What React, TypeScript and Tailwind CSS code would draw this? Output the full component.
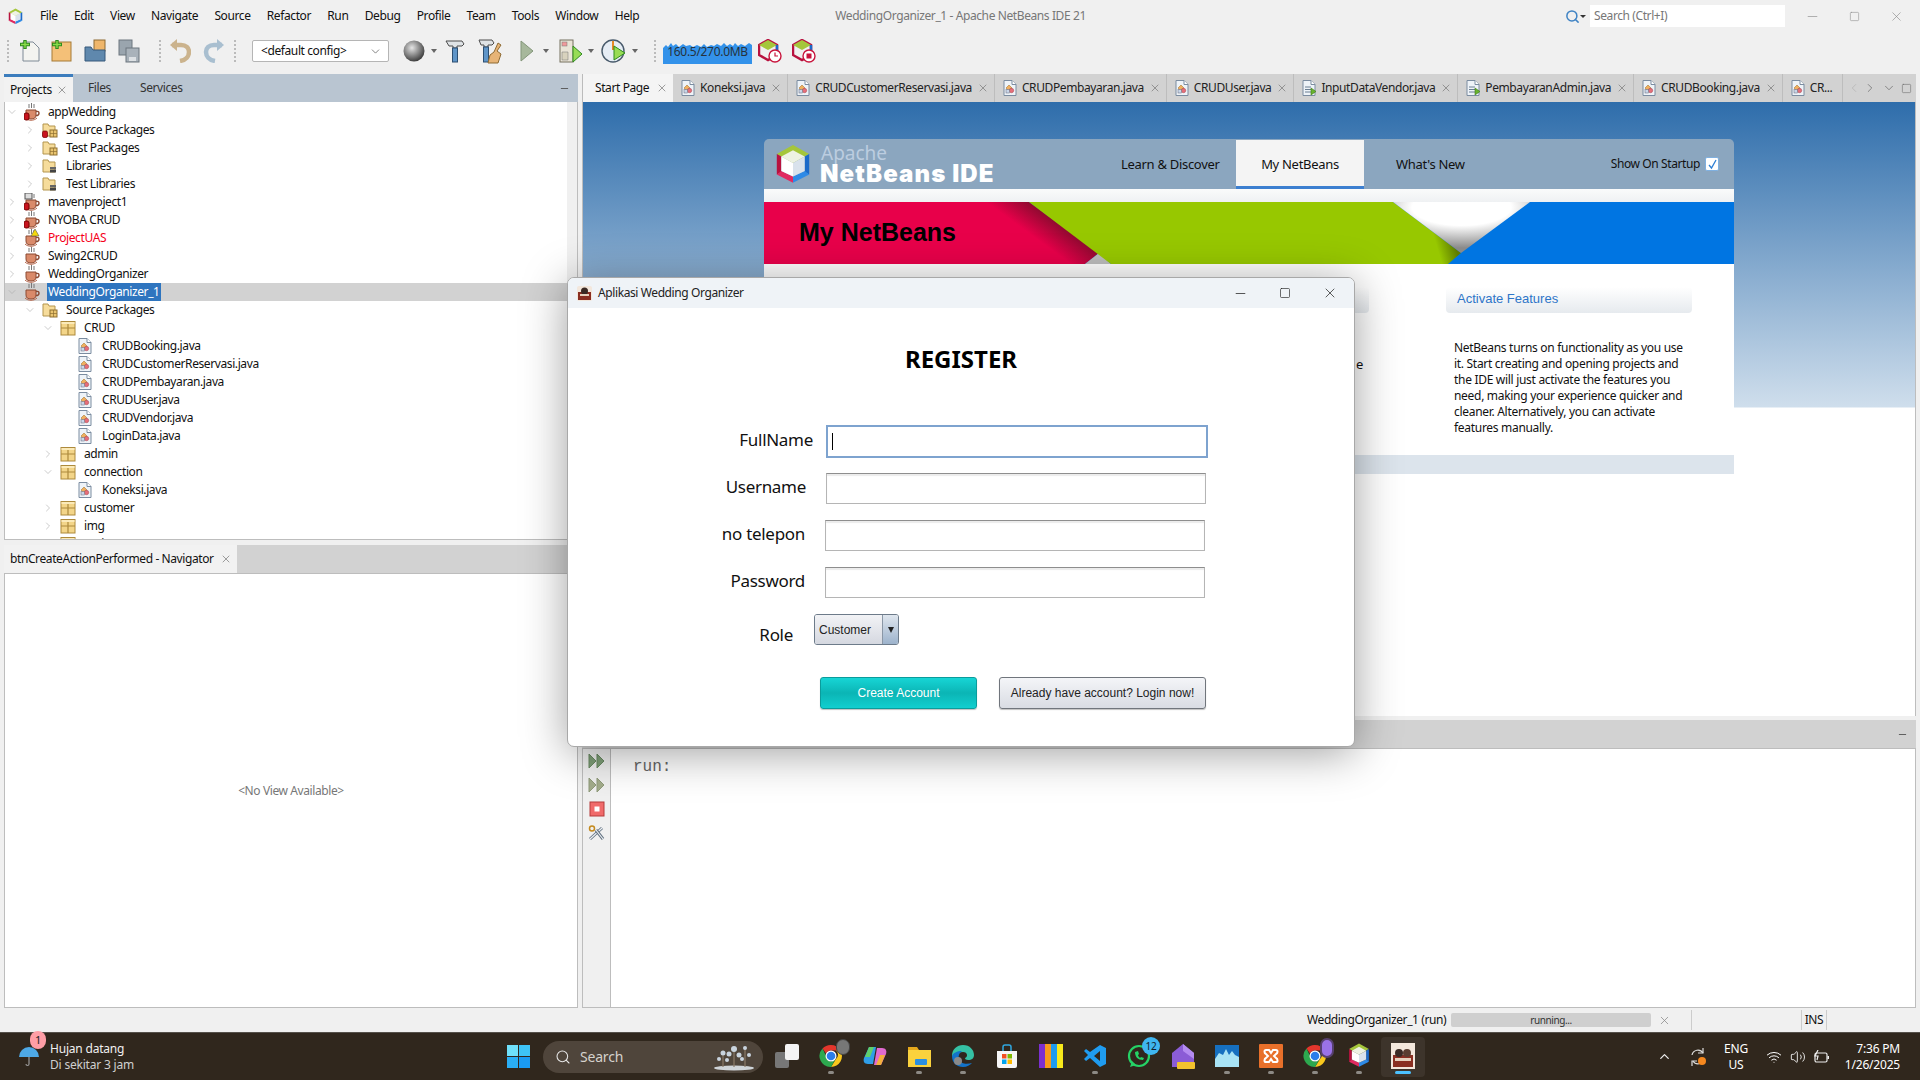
import { ChevronDown, ChevronLeft, ChevronRight, ChevronUp, Minus, Search, Square, Volume2, Wifi, X } from "lucide-react"

const ui = "font-['Noto_Sans',sans-serif] tracking-[-0.4px]"

function CupIcon({ badge }: { badge?: "red" | "warn" | "maven" }) {
  return (
    <svg width="17" height="18" viewBox="0 0 17 18" className="shrink-0">
      <path d="M5 1v4M7.5 0v5M10 1v4" stroke="#777" strokeWidth="1" />
      <path d="M2 7h10v5c0 3-2 4-5 4s-5-1-5-4z" fill="#d98a6a" stroke="#8c4a33" />
      <path d="M12 8.5c4-1 4 4 0 4" fill="none" stroke="#8c4a33" strokeWidth="1.4" />
      <path d="M1 15c3 3 9 3 12 0" fill="none" stroke="#b5654a" />
      {badge === "red" && <rect x="0" y="10" width="5" height="7" rx="2" fill="#c8141e" stroke="#700" />}
      {badge === "maven" && <rect x="0" y="10" width="5" height="7" rx="2" fill="#c8141e" stroke="#700" />}
      {badge === "maven" && <rect x="1" y="0" width="7" height="6" fill="#ddd" stroke="#555" />}
      {badge === "warn" && <path d="M11 0l4 7H7z" fill="#f5d90a" stroke="#555" strokeWidth=".6" />}
    </svg>
  )
}

function FolderIcon({ kind, red }: { kind: "src" | "lib"; red?: boolean }) {
  return (
    <svg width="16" height="16" viewBox="0 0 16 16" className="shrink-0">
      <path d="M1 2h5l1 2h6v10H1z" fill="#f6dc9b" stroke="#b3954f" />
      {kind === "src" ? (
        <g>
          <rect x="8" y="8" width="7" height="7" fill="#e9c46f" stroke="#8f7030" />
          <path d="M11.5 8v7M8 11.5h7" stroke="#8f7030" strokeWidth=".7" />
        </g>
      ) : (
        <g>
          <rect x="8" y="9" width="6" height="2" fill="#666" />
          <rect x="8" y="11.5" width="6" height="3" fill="#444" />
        </g>
      )}
      {red && <rect x="0.5" y="9" width="5" height="6.500" rx="1.500" fill="#c8141e" stroke="#700" strokeWidth=".7" />}
    </svg>
  )
}

function PackageIcon() {
  return (
    <svg width="16" height="16" viewBox="0 0 16 16" className="shrink-0">
      <rect x="1" y="1.5" width="14" height="13.5" fill="#f3d589" stroke="#ad8a3c" />
      <path d="M1 8h14M8 1.5V15" stroke="#ad8a3c" strokeWidth="1.2" />
      <rect x="1.5" y="2" width="13" height="2" fill="#fbeab9" />
    </svg>
  )
}

function FileIcon({ run }: { run?: boolean }) {
  return (
    <svg width="14" height="16" viewBox="0 0 14 16" className="shrink-0">
      <path d="M1 .5h8l4 4v11H1z" fill="#eef3f8" stroke="#7b8ca0" />
      <path d="M9 .5v4h4" fill="#fff" stroke="#7b8ca0" />
      {run ? (
        <g>
          <path d="M3 7h6M3 9.5h6M3 12h6" stroke="#6b7f93" />
          <path d="M9 8l5 3.5-5 3.5z" fill="#69b32e" stroke="#3d7a14" strokeWidth=".6" />
        </g>
      ) : (
        <g>
          <path d="M6 5l3 3-3 3-3-3z" fill="#f0b060" stroke="#9a6a20" strokeWidth=".5" />
          <circle cx="8.5" cy="10.5" r="2.2" fill="#e66f7a" stroke="#a03a44" strokeWidth=".5" />
          <rect x="3" y="9.5" width="3.5" height="3.5" fill="#c9d7ea" stroke="#667" strokeWidth=".5" />
        </g>
      )}
    </svg>
  )
}

function NetBeansLogo({ size }: { size: number }) {
  return (
    <svg width={size} height={size * 1.1} viewBox="0 0 40 44">
      <path d="M20 1L38 11 20 21 2 11z" fill="#a5c63b" />
      <path d="M2 11l5 3v17l-5 3z" fill="#b8123f" />
      <path d="M38 11l-5 3v17l5 3z" fill="#1b6ac9" />
      <path d="M2 34l18 9V36L7 30z" fill="#e02a60" />
      <path d="M38 34L20 43V36l13-6z" fill="#2e8ae6" />
      <path d="M7 14l13-7 13 7-13 7z" fill="#eef2e4" />
      <path d="M7 14l13 7v15L7 30z" fill="#ffffff" />
      <path d="M33 14l-13 7v15l13-6z" fill="#d9e2ec" />
    </svg>
  )
}

function Grip() {
  return <div className="w-[2px] h-[22px] border-l-2 border-dotted border-[#bbb] shrink-0" />
}

function DropCaret() {
  return <div className="w-0 h-0 border-x-[3px] border-x-transparent border-t-[4px] border-t-[#666] shrink-0" />
}

function CloseX({ className }: { className?: string }) {
  return <X size={12} strokeWidth={1.4} className={className ?? "text-[#777] shrink-0"} />
}

const menus = ["File", "Edit", "View", "Navigate", "Source", "Refactor", "Run", "Debug", "Profile", "Team", "Tools", "Window", "Help"]

function TitleBar() {
  return (
    <div className="h-[32px] flex items-center bg-[#f0f0f0] shrink-0">
      <div className="w-[40px] pl-[8px] flex">
        <NetBeansLogo size={15} />
      </div>
      <div className="flex gap-[16.3px] text-[12px] text-[#111]">
        {menus.map((m) => (
          <span key={m}>{m}</span>
        ))}
      </div>
      <div className="ml-[196px] text-[12px] text-[#777] w-[250px] text-center whitespace-nowrap">WeddingOrganizer_1 - Apache NetBeans IDE 21</div>
      <div className="ml-auto flex items-center">
        <Search size={15} strokeWidth={2.4} className="text-[#3f83c4]" />
        <div className="w-0 h-0 mr-[2px] border-x-[3px] border-x-transparent border-t-[3px] border-t-[#333]" />
        <div className="w-[195px] h-[22px] ml-[2px] bg-white text-[12px] text-[#777] pl-[4px] leading-[22px]">Search (Ctrl+I)</div>
        <div className="flex items-center text-[#888] pl-[20px] pr-[16px] gap-[29px]">
          <Minus size={15} strokeWidth={1} />
          <Square size={11} strokeWidth={1.2} />
          <X size={15} strokeWidth={1} />
        </div>
      </div>
    </div>
  )
}

function Toolbar() {
  return (
    <div className="h-[42px] flex items-center bg-[#f0f0f0] shrink-0 pl-[7px] pb-[4px]">
      <Grip />
      <svg width="22" height="24" viewBox="0 0 22 24" className="ml-[9px]">
        <path d="M5 3h10l6 6v13H5z" fill="#f4f4f0" stroke="#7e8a96" />
        <path d="M7 1v9M2 5.500h10" stroke="#2e8b1f" strokeWidth="3.400" />
        <path d="M7 2v7M3 5.500h8" stroke="#8bdc4b" strokeWidth="1.400" />
      </svg>
      <svg width="22" height="24" viewBox="0 0 22 24" className="ml-[10px]">
        <rect x="2" y="3" width="19" height="19" fill="#f4c078" stroke="#a57b36" />
        <path d="M7 1v9M2 5.500h10" stroke="#2e8b1f" strokeWidth="3.400" />
        <path d="M7 2v7M3 5.500h8" stroke="#8bdc4b" strokeWidth="1.400" />
      </svg>
      <svg width="22" height="24" viewBox="0 0 22 24" className="ml-[12px]">
        <rect x="10" y="1" width="11" height="11" fill="#efb66b" stroke="#8d6a33" />
        <path d="M1 8h6l2 3h12v11H1z" fill="#5f88ad" stroke="#37587a" />
      </svg>
      <svg width="22" height="24" viewBox="0 0 22 24" className="ml-[12px]">
        <rect x="1" y="1" width="13" height="15" fill="#9aa5ae" stroke="#6c767f" />
        <rect x="8" y="9" width="13" height="14" fill="#a9b2ba" stroke="#6c767f" />
        <rect x="11" y="18" width="7" height="4" fill="#dde1e4" />
      </svg>
      <div className="ml-[19px]">
        <Grip />
      </div>
      <svg width="22" height="24" viewBox="0 0 22 24" className="ml-[8px]">
        <path d="M3 6h9c5 0 8 3 8 7s-3 8-9 9" fill="none" stroke="#cbb38d" strokeWidth="4.500" />
        <path d="M8 0v12L1 6z" fill="#cbb38d" />
      </svg>
      <svg width="22" height="24" viewBox="0 0 22 24" className="ml-[12px]">
        <path d="M19 6h-8C6 6 3 9 3 13s3 8 9 9" fill="none" stroke="#a9bfd0" strokeWidth="4.500" />
        <path d="M14 0v12l7-6z" fill="#a9bfd0" />
      </svg>
      <div className="ml-[9px]">
        <Grip />
      </div>
      <div className="ml-[16px] w-[137px] h-[22px] bg-white border border-[#b5b5b5] rounded-[2px] flex items-center justify-between pl-[8px] pr-[6px] text-[12px] text-[#111]">
        <span>&lt;default config&gt;</span>
        <ChevronDown size={13} strokeWidth={1.2} className="text-[#444]" />
      </div>
      <svg width="22" height="22" viewBox="0 0 22 22" className="ml-[14px]">
        <defs>
          <radialGradient id="globe" cx=".4" cy=".35" r=".7">
            <stop offset="0" stopColor="#e5e5e5" />
            <stop offset="1" stopColor="#333" />
          </radialGradient>
        </defs>
        <circle cx="11" cy="11" r="10.500" fill="url(#globe)" />
      </svg>
      <div className="ml-[6px]">
        <DropCaret />
      </div>
      <svg width="20" height="24" viewBox="0 0 20 24" className="ml-[8px]">
        <path d="M1 2h16l2 3-2 2H12v2H8V7H4z" fill="#dfe3e6" stroke="#4c4c4c" />
        <rect x="7.500" y="9" width="5" height="14" fill="#5f95c8" stroke="#2c4f72" />
      </svg>
      <svg width="26" height="26" viewBox="0 0 26 26" className="ml-[13px]">
        <path d="M1 2h13l2 3-2 2h-4v2H6V7H3z" fill="#dfe3e6" stroke="#4c4c4c" />
        <rect x="5.500" y="9" width="5" height="15" fill="#5f95c8" stroke="#2c4f72" />
        <path d="M20 5l3 2-4 6 4 3-3 9H10l2-8 4-3z" fill="#e7b477" stroke="#8d6a33" />
      </svg>
      <svg width="14" height="22" viewBox="0 0 14 22" className="ml-[16px]">
        <path d="M1 1l12 10L1 21z" fill="#a7b89c" stroke="#83967a" />
      </svg>
      <div className="ml-[9px]">
        <DropCaret />
      </div>
      <svg width="24" height="26" viewBox="0 0 24 26" className="ml-[10px]">
        <rect x="1" y="2" width="13" height="22" fill="#e9e4d6" stroke="#74705f" />
        <rect x="3" y="4" width="5" height="4" fill="#f09a9a" stroke="#777" strokeWidth=".5" />
        <path d="M3 14h6v8H3z" fill="#d8d2bd" stroke="#777" strokeWidth=".5" />
        <path d="M14 8l9 8-9 8z" fill="#98dc55" stroke="#2e8b1f" />
      </svg>
      <div className="ml-[5px]">
        <DropCaret />
      </div>
      <svg width="26" height="26" viewBox="0 0 26 26" className="ml-[7px]">
        <circle cx="12" cy="13" r="11" fill="#e6edf5" stroke="#485a6b" strokeWidth="1.400" />
        <path d="M12 3v9" stroke="#e68a25" strokeWidth="2" />
        <path d="M13 8l11 7-11 7z" fill="#98dc55" stroke="#2e8b1f" />
      </svg>
      <div className="ml-[5px]">
        <DropCaret />
      </div>
      <div className="ml-[16px]">
        <Grip />
      </div>
      <div className="ml-[7px] relative w-[89px] h-[22px] mt-[4px] text-[12px] leading-[20px] tracking-[-0.3px] text-center text-[#26323d]">
        <svg viewBox="0 0 89 22" className="absolute inset-0 w-full h-full">
          <path d="M0 6l3-3 2 2 3-4 2 3 3-2 3 3 4-3 3 2 4-1 3 2 4-2 4 2 3-3 3 3 4-2 3 1 3-2 4 2 3-3 3 3 3-2 3 2 2-3 3 3 3-2 4 2 4-3 3 2V22H0z" fill="#3392ea" />
        </svg>
        <span className="relative">160.5/270.0MB</span>
      </div>
      <svg width="24" height="24" viewBox="0 0 24 24" className="ml-[6px]">
        <path d="M10 1l9 5v10l-9 5-9-5V6z" fill="none" stroke="#b8123f" strokeWidth="2.500" />
        <path d="M10 1l9 5-9 5-9-5z" fill="#a5c63b" />
        <path d="M19 6v8" stroke="#1b6ac9" strokeWidth="2.500" />
        <circle cx="17" cy="17" r="6" fill="#fff" stroke="#c8143c" strokeWidth="1.400" />
        <path d="M17 13.500V17h3" fill="none" stroke="#c8143c" strokeWidth="1.200" />
      </svg>
      <svg width="24" height="24" viewBox="0 0 24 24" className="ml-[10px]">
        <path d="M10 1l9 5v10l-9 5-9-5V6z" fill="none" stroke="#b8123f" strokeWidth="2.500" />
        <path d="M10 1l9 5-9 5-9-5z" fill="#a5c63b" />
        <path d="M19 6v8" stroke="#1b6ac9" strokeWidth="2.500" />
        <circle cx="17" cy="17" r="6" fill="#fff" stroke="#c8143c" strokeWidth="1.400" />
        <rect x="14.500" y="14.500" width="5" height="5" fill="#c8143c" />
      </svg>
    </div>
  )
}

type Row = {
  level: 0 | 1 | 2 | 3
  open?: boolean
  caret?: boolean
  icon: "cup" | "cupRed" | "cupWarn" | "cupMaven" | "src" | "srcRed" | "lib" | "pkg" | "file"
  text: string
  selected?: boolean
  red?: boolean
}

const rows: Row[] = [
  { level: 0, caret: true, open: true, icon: "cupRed", text: "appWedding" },
  { level: 1, caret: true, icon: "srcRed", text: "Source Packages" },
  { level: 1, caret: true, icon: "src", text: "Test Packages" },
  { level: 1, caret: true, icon: "lib", text: "Libraries" },
  { level: 1, caret: true, icon: "lib", text: "Test Libraries" },
  { level: 0, caret: true, icon: "cupMaven", text: "mavenproject1" },
  { level: 0, caret: true, icon: "cupRed", text: "NYOBA CRUD" },
  { level: 0, caret: true, icon: "cupWarn", text: "ProjectUAS", red: true },
  { level: 0, caret: true, icon: "cup", text: "Swing2CRUD" },
  { level: 0, caret: true, icon: "cup", text: "WeddingOrganizer" },
  { level: 0, caret: true, open: true, icon: "cup", text: "WeddingOrganizer_1", selected: true },
  { level: 1, caret: true, open: true, icon: "src", text: "Source Packages" },
  { level: 2, caret: true, open: true, icon: "pkg", text: "CRUD" },
  { level: 3, icon: "file", text: "CRUDBooking.java" },
  { level: 3, icon: "file", text: "CRUDCustomerReservasi.java" },
  { level: 3, icon: "file", text: "CRUDPembayaran.java" },
  { level: 3, icon: "file", text: "CRUDUser.java" },
  { level: 3, icon: "file", text: "CRUDVendor.java" },
  { level: 3, icon: "file", text: "LoginData.java" },
  { level: 2, caret: true, icon: "pkg", text: "admin" },
  { level: 2, caret: true, open: true, icon: "pkg", text: "connection" },
  { level: 3, icon: "file", text: "Koneksi.java" },
  { level: 2, caret: true, icon: "pkg", text: "customer" },
  { level: 2, caret: true, icon: "pkg", text: "img" },
  { level: 2, caret: true, icon: "pkg", text: "main" },
]

const indent = ["pl-[1px]", "pl-[19px]", "pl-[37px]", "pl-[55px]"]

function RowIcon({ icon }: { icon: Row["icon"] }) {
  if (icon === "cup") return <CupIcon />
  if (icon === "cupRed") return <CupIcon badge="red" />
  if (icon === "cupWarn") return <CupIcon badge="warn" />
  if (icon === "cupMaven") return <CupIcon badge="maven" />
  if (icon === "src" || icon === "lib") return <FolderIcon kind={icon} />
  if (icon === "srcRed") return <FolderIcon kind="src" red />
  if (icon === "pkg") return <PackageIcon />
  return <FileIcon />
}

function TreeRow({ row }: { row: Row }) {
  return (
    <div className={`h-[18px] flex items-center ${indent[row.level]} ${row.selected ? "bg-[#d2d2d2]" : ""}`}>
      <div className="w-[13px] shrink-0 text-[#aaa]">
        {row.caret && (row.open ? <ChevronDown size={12} strokeWidth={1.2} /> : <ChevronRight size={12} strokeWidth={1.2} />)}
      </div>
      <div className="w-[28px] shrink-0 flex pl-[5px]">
        <RowIcon icon={row.icon} />
      </div>
      <span className={`text-[12px] leading-[18px] whitespace-nowrap px-[1px] ${row.red ? "text-[#f5001a]" : "text-[#111]"} ${row.selected ? "bg-[#2f75bf] text-white" : ""}`}>
        {row.text}
      </span>
    </div>
  )
}

function LeftPane() {
  return (
    <div className="w-[574px] ml-[4px] shrink-0 flex flex-col">
      <div className="h-[28px] bg-[#b9c5d1] flex items-stretch shrink-0 text-[12px]">
        <div className="w-[69px] bg-[#f2f2f2] border-t-[3px] border-[#3c7dbd] flex items-center pl-[6px] gap-[4px] text-[#111]">
          Projects
          <CloseX />
        </div>
        <span className="ml-[15px] self-center text-[#333]">Files</span>
        <span className="ml-[29px] self-center text-[#333]">Services</span>
        <Minus size={11} className="ml-auto mr-[8px] self-center text-[#555]" />
      </div>
      <div className="h-[438px] overflow-hidden bg-white border-x border-b border-[#bdbdbd] flex shrink-0">
        <div className="flex-1 pt-[1px]">
          {rows.map((row, i) => (
            <TreeRow key={i} row={row} />
          ))}
        </div>
        <div className="w-[10px] bg-[#f0f0f0]" />
      </div>
      <div className="h-[5px] shrink-0" />
      <div className="h-[28px] bg-[#d2d2d2] flex items-stretch shrink-0 text-[12px]">
        <div className="w-[233px] bg-[#f2f2f2] flex items-center pl-[6px] gap-[6px] text-[#111] whitespace-nowrap">
          btnCreateActionPerformed - Navigator
          <CloseX />
        </div>
      </div>
      <div className="flex-1 bg-white border border-[#bdbdbd] flex items-center justify-center text-[12px] text-[#777]">&lt;No View Available&gt;</div>
    </div>
  )
}

type Tab = { name: string; run?: boolean; noClose?: boolean }

const tabs: Tab[] = [
  { name: "Koneksi.java" },
  { name: "CRUDCustomerReservasi.java" },
  { name: "CRUDPembayaran.java" },
  { name: "CRUDUser.java" },
  { name: "InputDataVendor.java", run: true },
  { name: "PembayaranAdmin.java", run: true },
  { name: "CRUDBooking.java" },
  { name: "CR...", noClose: true },
]

function EditorTabs() {
  return (
    <div className="h-[28px] bg-[#d2d2d2] flex items-stretch shrink-0 text-[12px] text-[#222]">
      <div className="w-[91px] shrink-0 bg-[#f4f4f4] flex items-center pl-[12px] gap-[7px] text-[#111] border-l border-[#bbb] whitespace-nowrap">
        Start Page
        <CloseX />
      </div>
      {tabs.map((t) => (
        <div key={t.name} className="flex shrink-0 items-center pl-[8px] pr-[5px] border-r border-[#bdbdbd] last:border-r-0">
          <FileIcon run={t.run} />
          <span className="ml-[5px] mr-[5px] whitespace-nowrap">{t.name}</span>
          {!t.noClose && <CloseX />}
        </div>
      ))}
      <div className="ml-auto shrink-0 flex items-center gap-[2px] pr-[4px] text-[#666]">
        <ChevronLeft size={14} strokeWidth={1} className="text-[#aaa]" />
        <ChevronRight size={14} strokeWidth={1.2} />
        <ChevronDown size={14} strokeWidth={1.2} className="ml-[3px]" />
        <Square size={11} strokeWidth={1.2} className="ml-[3px]" />
      </div>
    </div>
  )
}

function Banner() {
  return (
    <div className="relative h-[62px] flex items-center pl-[35px] shrink-0">
      <svg viewBox="0 0 970 62" className="absolute inset-0 w-full h-full">
        <defs>
          <radialGradient id="fold" cx=".5" cy=".1" r=".8">
            <stop offset="0.45" stopColor="#ffffff" />
            <stop offset="1" stopColor="#8a8a8a" />
          </radialGradient>
          <linearGradient id="redShade" gradientUnits="userSpaceOnUse" x1="285" y1="46" x2="300" y2="25.500">
            <stop offset="0" stopColor="#e8004a" />
            <stop offset="1" stopColor="#8f0a30" />
          </linearGradient>
          <linearGradient id="greenShade" gradientUnits="userSpaceOnUse" x1="675" y1="52" x2="692" y2="47">
            <stop offset="0" stopColor="#97c800" />
            <stop offset="1" stopColor="#5f7d00" />
          </linearGradient>
        </defs>
        <rect width="970" height="62" fill="#0075e2" />
        <path d="M0 0H265L335 51 321 62H0z" fill="url(#redShade)" />
        <path d="M321 62L335 51 347 62z" fill="#bdbdbd" />
        <path d="M265 0H629L697 51 684 62H347z" fill="url(#greenShade)" />
        <path d="M629 0H766L697 51z" fill="url(#fold)" />
      </svg>
      <span className="relative font-['Liberation_Sans',sans-serif] font-bold text-[25px] tracking-normal text-black">My NetBeans</span>
    </div>
  )
}

function StartPage() {
  return (
    <div className="h-[614px] shrink-0 border-x border-[#bdbdbd] pt-[37px] pl-[181px] bg-[linear-gradient(#2e6dab_0px,#cfdeec_305px,#ffffff_306px)]">
      <div className="w-[970px] flex flex-col">
        <div className="h-[50px] bg-[#8ba6bf] rounded-t-[5px] flex items-stretch">
          <div className="w-[357px] flex items-center pl-[11px]">
            <NetBeansLogo size={36} />
            <div className="ml-[10px] flex flex-col leading-none">
              <span className="text-[19px] leading-[18px] tracking-normal text-[#bccde0]">Apache</span>
              <span className="font-['Inter',sans-serif] font-black text-[24px] leading-[23px] text-white -ml-[1px] tracking-[1.1px]">NetBeans IDE</span>
            </div>
          </div>
          <div className="w-[115px] pt-[2px] text-[13px] flex items-center text-[#111] tracking-[-0.3px]">Learn &amp; Discover</div>
          <div className="w-[128px] mt-[1px] pt-[3px] bg-[#f4f4f4] border-b-[3px] border-[#3c7fd0] text-[13px] flex items-center justify-center text-[#111] tracking-[-0.3px]">My NetBeans</div>
          <div className="ml-[32px] pt-[2px] text-[13px] flex items-center text-[#111] tracking-[-0.3px]">What's New</div>
          <div className="ml-auto pr-[15px] text-[12px] flex items-center gap-[5px] text-[#111]">
            Show On Startup
            <div className="w-[14px] h-[14px] bg-white border border-[#7fb0e0] rounded-[2px] flex items-center justify-center">
              <svg width="11" height="11" viewBox="0 0 11 11">
                <path d="M2 6l2.500 3L9 1" fill="none" stroke="#2d7fd3" strokeWidth="1.300" />
              </svg>
            </div>
          </div>
        </div>
        <div className="h-[13px] bg-[linear-gradient(#fafbfb,#eff1f3)]" />
        <Banner />
        <div className="h-[191px] bg-white flex relative">
          <div className="ml-[30px] mt-[23px] w-[575px] h-[26px] rounded-[4px] bg-[linear-gradient(#ffffff,#e6eaee)]" />
          <div className="absolute left-[592px] top-[91px] text-[13px] text-[#111]">e</div>
          <div className="ml-[77px] mt-[23px] w-[246px] flex flex-col">
            <div className="h-[26px] rounded-[4px] bg-[linear-gradient(#ffffff,#e6eaee)] pl-[11px] font-['Liberation_Sans',sans-serif] text-[13px] leading-[24px] tracking-normal text-[#2e75c8]">Activate Features</div>
            <p className="mt-[27px] ml-[8px] w-[236px] text-[12px] leading-[16px] tracking-[-0.3px] text-[#111]">
              NetBeans turns on functionality as you use it. Start creating and opening projects and the IDE will just activate the features you need, making your experience quicker and cleaner. Alternatively, you can activate features manually.
            </p>
          </div>
        </div>
        <div className="h-[19px] bg-[#dce4ec]" />
      </div>
    </div>
  )
}

function OutputPane() {
  return (
    <div className="flex-1 flex flex-col min-h-0">
      <div className="h-[4px] shrink-0" />
      <div className="h-[28px] bg-[#d2d2d2] shrink-0 flex items-center justify-end pr-[8px]">
        <Minus size={11} className="text-[#555]" />
      </div>
      <div className="flex-1 flex border border-[#bdbdbd] bg-white">
        <div className="w-[28px] bg-[#f0f0f0] border-r border-[#bdbdbd] flex flex-col items-center pt-[4px] gap-[8px]">
          <svg width="17" height="16" viewBox="0 0 17 16">
            <path d="M1 1l7 7-7 7zM9 1l7 7-7 7z" fill="#7f9f78" stroke="#6a8a63" />
          </svg>
          <svg width="17" height="16" viewBox="0 0 17 16">
            <path d="M1 1l7 7-7 7zM9 1l7 7-7 7z" fill="#a3ad8c" stroke="#8f9a7a" />
          </svg>
          <svg width="16" height="16" viewBox="0 0 16 16">
            <rect x="1" y="1" width="14" height="14" fill="#f06a6a" stroke="#b53a3a" />
            <rect x="5.500" y="5.500" width="5" height="5" fill="#fff" />
          </svg>
          <svg width="17" height="16" viewBox="0 0 17 16">
            <circle cx="4" cy="3.500" r="2.500" fill="none" stroke="#c48a1e" strokeWidth="1.500" />
            <path d="M2 14L14 3" stroke="#5f6f7f" strokeWidth="3" />
            <path d="M2 14L14 3" stroke="#eef1f4" strokeWidth="1.200" />
            <path d="M8 5l7 9" stroke="#5f6f7f" strokeWidth="3" />
            <path d="M8 5l7 9" stroke="#eef1f4" strokeWidth="1.200" />
          </svg>
        </div>
        <div className="pl-[22px] pt-[8px] font-['Liberation_Mono',monospace] text-[16px] leading-[20px] tracking-normal text-[#666]">run:</div>
      </div>
    </div>
  )
}

function Dialog() {
  const label = "text-[17px] leading-[24px] tracking-[-0.3px] text-[#111] whitespace-nowrap text-right shrink-0"
  const input = "h-[31px] bg-white border border-[#b5b5b5] border-t-[#8e8e8e] shadow-[inset_0_2px_1px_#ececec]"
  const button = "h-[32px] rounded-[3px] text-[12px] tracking-normal flex items-center justify-center shadow-[0_1px_1px_rgba(0,0,0,0.25)]"
  return (
    <div className="absolute left-[567px] top-[277px] w-[788px] h-[470px] bg-white rounded-[7px] border border-[#a8a8a8] shadow-[0_6px_45px_rgba(0,0,0,0.38)] flex flex-col overflow-hidden">
      <div className="h-[30px] bg-[#eff3f7] flex items-center shrink-0 pl-[9px] pr-[16px] text-[12px] text-[#222]">
        <svg width="15" height="15" viewBox="0 0 15 15">
          <rect width="15" height="15" rx="2" fill="#f3e7dc" />
          <path d="M1 6h13v8H1z" fill="#8a2f22" />
          <circle cx="7.500" cy="5" r="3.500" fill="#3a2a24" />
          <rect x="3" y="8" width="9" height="2" fill="#e6d1bd" />
        </svg>
        <span className="ml-[6px]">Aplikasi Wedding Organizer</span>
        <div className="ml-auto flex items-center text-[#222] gap-[31px]">
          <Minus size={15} strokeWidth={1.2} />
          <Square size={12} strokeWidth={1.3} />
          <X size={16} strokeWidth={1.1} />
        </div>
      </div>
      <div className="flex-1 flex flex-col">
        <div className="mt-[35px] text-center text-[24px] leading-[32px] font-bold tracking-normal text-black">REGISTER</div>
        <div className="mt-[50px] flex items-center h-[33px]">
          <span className={`${label} w-[245px] -mt-[3px]`}>FullName</span>
          <div className="ml-[13px] w-[382px] h-[33px] bg-white border-2 border-[#7ea3cf] flex items-center pl-[4px]">
            <div className="w-[1px] h-[17px] bg-black" />
          </div>
        </div>
        <div className="mt-[15px] flex items-center">
          <span className={`${label} w-[238px] -mt-[3px]`}>Username</span>
          <div className={`${input} ml-[20px] w-[380px]`} />
        </div>
        <div className="mt-[16px] flex items-center">
          <span className={`${label} w-[237px] -mt-[3px]`}>no telepon</span>
          <div className={`${input} ml-[20px] w-[380px]`} />
        </div>
        <div className="mt-[16px] flex items-center">
          <span className={`${label} w-[237px] -mt-[3px]`}>Password</span>
          <div className={`${input} ml-[20px] w-[380px]`} />
        </div>
        <div className="mt-[16px] flex items-start">
          <span className={`${label} w-[225px] mt-[9px]`}>Role</span>
          <div className="ml-[21px] w-[85px] h-[31px] rounded-[3px] border border-[#6d7b8a] flex items-stretch overflow-hidden font-['Liberation_Sans',sans-serif] text-[12px] tracking-normal text-[#222]">
            <div className="flex-1 bg-[linear-gradient(#f2f3f6,#d5d8e0)] flex items-center pl-[4px]">Customer</div>
            <div className="w-[16px] bg-[linear-gradient(#dfe6ee,#9db3cc)] border-l border-[#8a97a6] flex items-center justify-center">
              <div className="w-0 h-0 border-x-[3.5px] border-x-transparent border-t-[6px] border-t-[#222]" />
            </div>
          </div>
        </div>
        <div className="mt-[30px] flex items-center font-['Liberation_Sans',sans-serif]">
          <div className={`${button} ml-[252px] w-[157px] border border-[#0b9c9c] bg-[linear-gradient(#17d5d5,#0bb5b5_50%,#11cfcf)] text-white`}>Create Account</div>
          <div className={`${button} ml-[22px] w-[207px] border border-[#70757c] bg-[linear-gradient(#f4f5f8,#d9dce3)] text-[#222]`}>Already have account? Login now!</div>
        </div>
      </div>
    </div>
  )
}

function StatusBar() {
  return (
    <div className="h-[24px] bg-[#f0f0f0] shrink-0 flex items-center text-[12px] text-[#111]">
      <span className="ml-[1307px] w-[144px] whitespace-nowrap">WeddingOrganizer_1 (run)</span>
      <div className="w-[200px] h-[14px] bg-[#cfcfcf] rounded-[2px] text-[10px] leading-[14px] text-center text-[#333]">running...</div>
      <X size={13} strokeWidth={1.4} className="ml-[7px] text-[#888]" />
      <div className="ml-[20px] h-[20px] border-l border-[#ccc]" />
      <div className="ml-[109px] h-[20px] w-[26px] border-x border-[#ccc] text-center leading-[20px]">INS</div>
    </div>
  )
}

function Dot({ active }: { active?: boolean }) {
  return <div className={`h-[3px] rounded-full ${active ? "w-[16px] bg-[#4cc2ff]" : "w-[6px] bg-[#8d8a85]"}`} />
}

function TaskIcon({ children, dot, active }: { children: React.ReactNode; dot?: boolean; active?: boolean }) {
  return (
    <div className={`w-[44px] h-[40px] flex flex-col items-center pt-[5px] relative rounded-[4px] ${active ? "bg-[#3d342b]" : ""}`}>
      <div className="h-[28px] flex items-center justify-center">{children}</div>
      <div className="mt-[1px] h-[3px]">{dot && <Dot active={active} />}</div>
    </div>
  )
}

function ChromeIcon() {
  return (
    <svg width="24" height="24" viewBox="0 0 24 24">
      <path d="M12 1a11 11 0 0 1 9.500 5.500H12a5.500 5.500 0 0 0-5 3L3.500 4.500A11 11 0 0 1 12 1z" fill="#e3362c" />
      <path d="M21.500 6.500A11 11 0 0 1 12 23l5-8a5.500 5.500 0 0 0 0-8.500z" fill="#f9c81d" />
      <path d="M12 23A11 11 0 0 1 3.500 4.500L7 12a5.500 5.500 0 0 0 5.500 5.500l4-2.500z" fill="#2da94f" />
      <circle cx="12" cy="12" r="5.500" fill="#fff" />
      <circle cx="12" cy="12" r="4.300" fill="#2b7de9" />
    </svg>
  )
}

function Taskbar() {
  return (
    <div className="h-[48px] bg-[#30271d] border-t border-[#55504a] shrink-0 flex items-center text-white relative tracking-[-0.2px]">
      <div className="w-[507px] flex items-center pl-[19px] shrink-0 relative">
        <svg width="20" height="20" viewBox="0 0 20 20">
          <path d="M0 10a10 10 0 0 1 20 0z" fill="#4ea9e6" />
          <path d="M10 10v7c0 2-3 2-3 0" fill="none" stroke="#999" strokeWidth="1.200" />
        </svg>
        <div className="absolute left-[30px] -top-[10px] w-[16px] h-[18px] rounded-full bg-[#ff9ea6] text-[11px] leading-[18px] text-center text-[#222]">1</div>
        <div className="ml-[11px] flex flex-col text-[12px] leading-[16px]">
          <span className="text-[#f0f0f0]">Hujan datang</span>
          <span className="text-[#cfcfcf]">Di sekitar 3 jam</span>
        </div>
      </div>
      <svg width="23" height="23" viewBox="0 0 23 23" className="shrink-0">
        <rect width="11" height="11" fill="#6fe0fa" />
        <rect x="12" width="11" height="11" fill="#3ec4f7" />
        <rect y="12" width="11" height="11" fill="#2aaef5" />
        <rect x="12" y="12" width="11" height="11" fill="#1a9af2" />
      </svg>
      <div className="ml-[13px] w-[220px] h-[32px] bg-[#4f453b] rounded-full flex items-center pl-[12px] pr-[8px] text-[14px] text-[#d5d2cd] shrink-0">
        <Search size={16} strokeWidth={1.6} className="text-[#e6e6e6]" />
        <span className="ml-[9px]">Search</span>
        <svg width="42" height="28" viewBox="0 0 42 28" className="ml-auto">
          <ellipse cx="21" cy="25" rx="20" ry="2.500" fill="#cfd4d8" />
          <path d="M21 24V8M10 24V12M32 24V6" stroke="#8a7a68" strokeWidth="1.200" />
          <g fill="#c9d4de">
            <circle cx="21" cy="6" r="3" />
            <circle cx="16" cy="11" r="2.500" />
            <circle cx="26" cy="12" r="2.500" />
            <circle cx="10" cy="10" r="2.500" />
            <circle cx="6" cy="16" r="2" />
            <circle cx="14" cy="17" r="2" />
            <circle cx="32" cy="5" r="2" />
            <circle cx="36" cy="12" r="2" />
            <circle cx="29" cy="16" r="2" />
          </g>
        </svg>
      </div>
      <div className="ml-[2px] flex items-center shrink-0">
        <TaskIcon>
          <div className="relative w-[24px] h-[24px]">
            <div className="absolute left-0 bottom-0 w-[14px] h-[16px] bg-[#777] rounded-[2px]" />
            <div className="absolute right-0 top-0 w-[14px] h-[16px] bg-[#f4f4f4] rounded-[2px]" />
          </div>
        </TaskIcon>
        <TaskIcon dot>
          <ChromeIcon />
          <div className="absolute right-[3px] top-[2px] w-[14px] h-[16px] rounded-full bg-[#777] border border-[#444]" />
        </TaskIcon>
        <TaskIcon>
          <svg width="24" height="24" viewBox="0 0 24 24">
            <path d="M6 3h7l-3 17H5c-4 0-5-3-4-6z" fill="#2f9ee8" />
            <path d="M6 3h5l-4 10H2z" fill="#5fcf6a" />
            <path d="M18 21h-7l3-17h5c4 0 5 3 4 6z" fill="#e06ad0" />
            <path d="M18 21h-5l4-10h5z" fill="#f4b13c" />
          </svg>
        </TaskIcon>
        <TaskIcon dot>
          <svg width="24" height="24" viewBox="0 0 24 24">
            <path d="M1 3h9l2 3H1z" fill="#e5a81c" />
            <rect x="1" y="6" width="23" height="17" fill="#fad23d" />
            <rect x="8" y="15" width="12" height="6" rx="1" fill="#2b8fe0" />
          </svg>
        </TaskIcon>
        <TaskIcon dot>
          <svg width="24" height="24" viewBox="0 0 24 24">
            <path d="M1 12C1 5 6 1 12 1c7 0 11 5 11 10 0 3-2 5-6 5-2 0-3-1-3-2 3-1 3-6-2-6-6 0-9 5-11 4z" fill="#35c1a4" />
            <path d="M1 12c0 7 5 11 11 11 4 0 7-2 9-4-4 1-11 2-13-4-1-3 0-6 3-8-5 0-9 2-10 5z" fill="#1373c9" />
            <circle cx="7" cy="17" r="4" fill="#8a8a8a" />
          </svg>
        </TaskIcon>
        <TaskIcon>
          <svg width="24" height="24" viewBox="0 0 24 24">
            <path d="M2 7h20v15a2 2 0 0 1-2 2H4a2 2 0 0 1-2-2z" fill="#f6f6f6" />
            <path d="M8 7V3a2 2 0 0 1 2-2h4a2 2 0 0 1 2 2v4" fill="none" stroke="#2fa8e0" strokeWidth="1.500" />
            <rect x="7" y="10" width="4.500" height="4.500" fill="#f25022" />
            <rect x="12.500" y="10" width="4.500" height="4.500" fill="#7fba00" />
            <rect x="7" y="15.500" width="4.500" height="4.500" fill="#00a4ef" />
            <rect x="12.500" y="15.500" width="4.500" height="4.500" fill="#ffb900" />
          </svg>
        </TaskIcon>
        <TaskIcon>
          <svg width="24" height="24" viewBox="0 0 24 24">
            <rect width="6" height="24" x="0" fill="#7b2fd0" />
            <rect width="6" height="24" x="6" fill="#f79a1b" />
            <rect width="6" height="24" x="12" fill="#1d9bf0" />
            <rect width="6" height="24" x="18" fill="#f7e91b" />
          </svg>
        </TaskIcon>
        <TaskIcon dot>
          <svg width="24" height="24" viewBox="0 0 24 24">
            <path d="M17 1l6 3v16l-6 3-10-9-4 3-2-2 4-4-4-4 2-2 4 3zM17 7l-6 5 6 5z" fill="#1f9cf0" />
          </svg>
        </TaskIcon>
        <TaskIcon>
          <svg width="24" height="24" viewBox="0 0 24 24">
            <circle cx="12" cy="12" r="10" fill="none" stroke="#25d366" strokeWidth="2.200" />
            <path d="M3 23l2-6 4 4z" fill="#25d366" />
            <path d="M8 8c0 5 3 8 8 8l1-2-3-1-1 1c-1-1-2-2-2-3l1-1-1-3z" fill="#25d366" />
          </svg>
          <div className="absolute right-[1px] top-[0px] w-[18px] h-[18px] rounded-full bg-[#3fb6f0] text-[10px] leading-[18px] text-center text-[#10202c]">12</div>
        </TaskIcon>
        <TaskIcon>
          <svg width="24" height="26" viewBox="0 0 24 26">
            <path d="M12 1l11 9v14H1V10z" fill="#8b5cd6" />
            <path d="M12 1l11 9v6L12 8z" fill="#b48bf0" />
            <rect x="6" y="19" width="18" height="7" rx="1" fill="#f2c12e" />
          </svg>
        </TaskIcon>
        <TaskIcon dot>
          <svg width="24" height="22" viewBox="0 0 24 22">
            <rect width="24" height="22" fill="#1670c0" />
            <path d="M0 14l4-6 4 2 3-6 3 6 3-4 3 4 4 2v10H0z" fill="#a8e3f5" />
          </svg>
        </TaskIcon>
        <TaskIcon dot>
          <svg width="24" height="24" viewBox="0 0 24 24">
            <rect width="24" height="24" rx="1" fill="#e8702a" />
            <path d="M7 6h3l2 3 2-3h3c2 0 2 3 0 4l-2 2 2 2c2 1 2 4 0 4h-3l-2-3-2 3H7c-2 0-2-3 0-4l2-2-2-2c-2-1-2-4 0-4z" fill="none" stroke="#fff" strokeWidth="2" />
          </svg>
        </TaskIcon>
        <TaskIcon dot>
          <ChromeIcon />
          <div className="absolute right-[3px] top-[1px] w-[14px] h-[20px] rounded-full bg-[#9a72e8] border-2 border-[#57406f]" />
        </TaskIcon>
        <TaskIcon dot>
          <NetBeansLogo size={22} />
        </TaskIcon>
        <TaskIcon dot active>
          <svg width="24" height="26" viewBox="0 0 24 26">
            <rect width="24" height="26" fill="#f3e7dc" />
            <path d="M2 12h20v12H2z" fill="#8a2f22" />
            <circle cx="8" cy="10" r="4" fill="#3a2a24" />
            <circle cx="16" cy="10" r="4" fill="#5a3d30" />
            <rect x="4" y="15" width="16" height="3" fill="#e6d1bd" />
          </svg>
        </TaskIcon>
      </div>
      <div className="absolute left-[1657px] top-0 h-[47px] flex items-center">
        <ChevronUp size={15} strokeWidth={2} className="text-[#eee]" />
        <svg width="18" height="20" viewBox="0 0 18 20" className="ml-[17px]">
          <path d="M3 8a6 6 0 0 1 11-2M15 12a6 6 0 0 1-11 2" fill="none" stroke="#ddd" strokeWidth="1.200" />
          <path d="M14 1v5H9M3 19v-5h5" fill="none" stroke="#ddd" strokeWidth="1.200" />
          <circle cx="13" cy="14" r="4" fill="#f5881f" />
        </svg>
        <div className="ml-[11px] w-[36px] text-center text-[12px] leading-[16px]">
          <div>ENG</div>
          <div>US</div>
        </div>
        <Wifi size={16} strokeWidth={1.5} className="ml-[12px]" />
        <Volume2 size={16} strokeWidth={1.3} className="ml-[8px]" />
        <svg width="17" height="14" viewBox="0 0 17 14" className="ml-[7px]">
          <rect x="2" y="3" width="12" height="9" rx="1.500" fill="none" stroke="#eee" strokeWidth="1.200" />
          <rect x="14.500" y="6" width="1.500" height="3" fill="#eee" />
          <path d="M5 0L2 6h3l-1 4" fill="none" stroke="#eee" strokeWidth="1.200" />
        </svg>
        <div className="ml-[13px] w-[57px] text-right text-[12px] leading-[16px]">
          <div>7:36 PM</div>
          <div>1/26/2025</div>
        </div>
      </div>
    </div>
  )
}

export default function App() {
  return (
    <div className={`relative w-[1920px] h-[1080px] overflow-hidden flex flex-col bg-[#f0f0f0] ${ui}`}>
      <TitleBar />
      <Toolbar />
      <div className="flex-1 flex min-h-0">
        <LeftPane />
        <div className="w-[1334px] ml-[4px] flex flex-col shrink-0">
          <EditorTabs />
          <StartPage />
          <OutputPane />
        </div>
      </div>
      <StatusBar />
      <Taskbar />
      <Dialog />
    </div>
  )
}
